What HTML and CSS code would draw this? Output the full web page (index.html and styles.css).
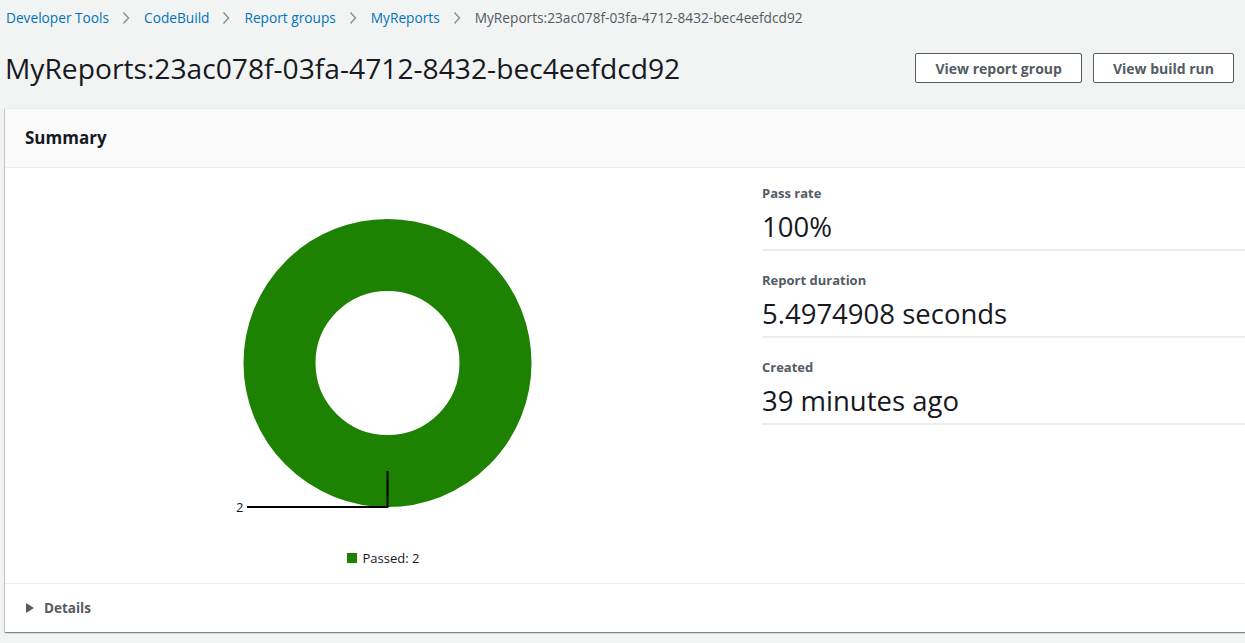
FILE: index.html
```html
<!DOCTYPE html>
<html lang="en">
<head>
<meta charset="utf-8">
<title>MyReports report</title>
<link rel="stylesheet" href="styles.css">
</head>
<body>
<div class="page">
  <nav class="breadcrumbs">
    <a class="crumb" href="#">Developer Tools</a>
    <svg class="chev" width="8" height="14" viewBox="0 0 8 14"><polyline points="1.5,1.5 6.5,7 1.5,12.5" fill="none" stroke="#879596" stroke-width="1.5"/></svg>
    <a class="crumb" href="#">CodeBuild</a>
    <svg class="chev" width="8" height="14" viewBox="0 0 8 14"><polyline points="1.5,1.5 6.5,7 1.5,12.5" fill="none" stroke="#879596" stroke-width="1.5"/></svg>
    <a class="crumb" href="#">Report groups</a>
    <svg class="chev" width="8" height="14" viewBox="0 0 8 14"><polyline points="1.5,1.5 6.5,7 1.5,12.5" fill="none" stroke="#879596" stroke-width="1.5"/></svg>
    <a class="crumb" href="#">MyReports</a>
    <svg class="chev" width="8" height="14" viewBox="0 0 8 14"><polyline points="1.5,1.5 6.5,7 1.5,12.5" fill="none" stroke="#879596" stroke-width="1.5"/></svg>
    <span class="crumb current">MyReports:23ac078f-03fa-4712-8432-bec4eefdcd92</span>
  </nav>

  <header class="page-header">
    <h1 class="title">MyReports:23ac078f-03fa-4712-8432-bec4eefdcd92</h1>
    <div class="actions">
      <button class="btn">View report group</button>
      <button class="btn">View build run</button>
    </div>
  </header>

  <section class="card">
    <div class="card-header"><h2>Summary</h2></div>
    <div class="card-body">
      <div class="chart-col">
        <svg class="donut" width="725" height="360" viewBox="0 0 725 360">
          <circle cx="362.5" cy="195" r="108" fill="none" stroke="#1d8102" stroke-width="72"/>
          <polyline points="362.5,303 362.5,339 222,339" fill="none" stroke="#000" stroke-width="2"/>
          <text x="211" y="343.5" class="donut-label">2</text>
        </svg>
        <div class="legend">
          <span class="swatch"></span><span class="legend-text">Passed: 2</span>
        </div>
      </div>
      <div class="stats-col">
        <div class="stat">
          <div class="stat-label">Pass rate</div>
          <div class="stat-value">100%</div>
        </div>
        <div class="stat">
          <div class="stat-label">Report duration</div>
          <div class="stat-value">5.4974908 seconds</div>
        </div>
        <div class="stat">
          <div class="stat-label">Created</div>
          <div class="stat-value">39 minutes ago</div>
        </div>
      </div>
    </div>
    <div class="card-footer">
      <span class="caret"></span><span class="details">Details</span>
    </div>
  </section>
</div>
</body>
</html>
```

FILE: styles.css
```css
html, body {
  margin: 0;
  padding: 0;
}
body {
  background: #f2f3f3;
  font-family: "Open Sans", "Liberation Sans", sans-serif;
  color: #16191f;
  overflow: hidden;
  width: 1245px;
  height: 643px;
}
.page {
  padding-left: 5px;
}
.breadcrumbs {
  display: flex;
  align-items: center;
  height: 20px;
  padding-top: 8px;
  font-size: 13.7px;
  line-height: 20px;
}
.crumb {
  color: #0073bb;
  text-decoration: none;
  padding-left: 1px;
}
.crumb.current {
  color: #545b64;
}
.chev {
  margin: 0 13px 0 13px;
  flex: none;
}
.page-header {
  display: flex;
  align-items: center;
  justify-content: space-between;
  height: 30px;
  margin-top: 25px;
  padding-right: 11px;
}
.title {
  margin: 0;
  font-size: 28.2px;
  font-weight: 400;
  line-height: 30px;
  color: #16191f;
}
.actions {
  display: flex;
  gap: 11px;
}
.btn {
  height: 30px;
  padding: 0 19px;
  border: 1px solid #545b64;
  border-radius: 2px;
  background: #fff;
  color: #545b64;
  font-family: "Open Sans", "Liberation Sans", sans-serif;
  font-weight: 700;
  font-size: 14px;
}
.card {
  margin-top: 25px;
  margin-right: -30px;
  background: #fff;
  box-shadow: 0 1px 1px 0 rgba(0, 28, 36, 0.3), 1px 1px 1px 0 rgba(0, 28, 36, 0.15), -1px 1px 1px 0 rgba(0, 28, 36, 0.15);
  border-top: 1px solid #eaeded;
}
.card-header {
  background: #fafafa;
  border-bottom: 1px solid #eaeded;
  height: 58px;
  display: flex;
  align-items: center;
  padding-left: 20px;
}
.card-header h2 {
  margin: 0;
  font-size: 17px;
  font-weight: 700;
  line-height: 22px;
}
.card-body {
  display: grid;
  grid-template-columns: 725px 1fr;
  gap: 12px;
  padding-left: 20px;
  border-bottom: 1px solid #eaeded;
}
.chart-col {
  display: flex;
  flex-direction: column;
  padding-bottom: 17px;
}
.donut {
  display: block;
}
.donut-label {
  font-family: "Open Sans", "Liberation Sans", sans-serif;
  font-size: 13px;
  fill: #16191f;
}
.legend {
  margin-top: 22px;
  height: 16px;
  display: flex;
  align-items: center;
  justify-content: center;
  padding-right: 9px;
}
.swatch {
  width: 10px;
  height: 10px;
  background: #1d8102;
  margin-right: 6px;
}
.legend-text {
  font-size: 13px;
  line-height: 16px;
  color: #16191f;
}
.stats-col {
  padding-top: 15px;
}
.stat {
  margin-bottom: 19px;
  padding-bottom: 5px;
  border-bottom: 2px solid #eaeded;
}
.stat-label {
  font-size: 13px;
  font-weight: 700;
  line-height: 20px;
  color: #545b64;
}
.stat-value {
  margin-top: 7px;
  font-size: 27.5px;
  line-height: 34px;
  color: #16191f;
}
.card-footer {
  height: 48px;
  display: flex;
  align-items: center;
  padding-left: 21px;
}
.caret {
  width: 0;
  height: 0;
  border-top: 5px solid transparent;
  border-bottom: 5px solid transparent;
  border-left: 8px solid #545b64;
  margin-right: 10px;
}
.details {
  font-size: 13.5px;
  font-weight: 700;
  color: #545b64;
}
```
